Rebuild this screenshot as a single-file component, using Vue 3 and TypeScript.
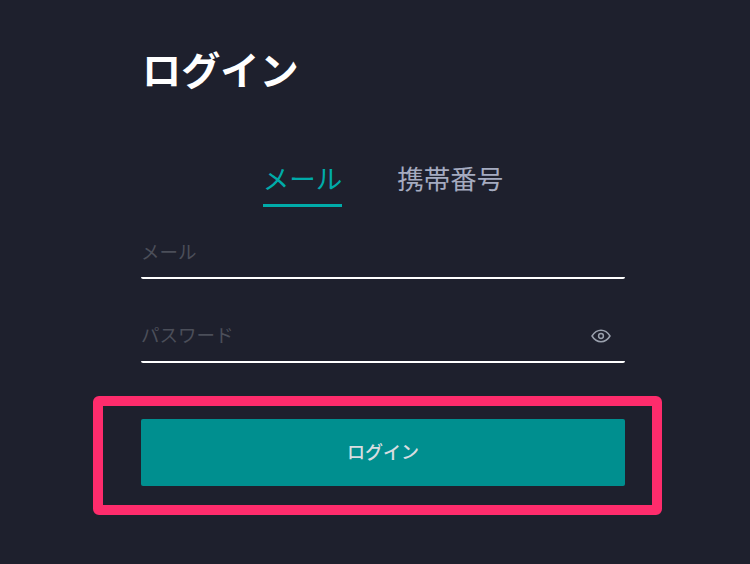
<script setup lang="ts">
import { ref } from 'vue'

const tabs = ref<string[]>(['メール', '携帯番号'])
const active = ref<number>(0)
</script>

<template>
  <main class="page">
    <h1 class="title">ログイン</h1>
    <div class="tabs">
      <button
        v-for="(tab, i) in tabs"
        :key="tab"
        type="button"
        class="tab"
        :class="{ active: i === active }"
        @click="active = i"
      >
        {{ tab }}
      </button>
    </div>
    <form class="form" @submit.prevent>
      <label class="field">
        <input class="input" type="text" placeholder="メール" />
      </label>
      <label class="field">
        <input class="input" type="password" placeholder="パスワード" />
        <svg class="eye" viewBox="0 0 20 20" fill="none" aria-hidden="true">
          <path d="M1 10c2.400-3.900 5.400-5.800 9-5.800s6.600 1.900 9 5.800c-2.400 3.900-5.400 5.800-9 5.800S3.400 13.900 1 10z" stroke="#9aa0ad" stroke-width="1.500" stroke-linejoin="round" />
          <circle cx="10" cy="10" r="2.400" stroke="#9aa0ad" stroke-width="1.500" />
        </svg>
      </label>
      <div class="highlight">
        <button type="submit" class="submit">ログイン</button>
      </div>
    </form>
  </main>
</template>

<style>
html,
body {
  margin: 0;
  background: #1e202d;
}
</style>

<style scoped>
.page {
  box-sizing: border-box;
  width: 750px;
  height: 564px;
  padding: 40px 125px 0 141px;
  background: #1e202d;
  overflow: hidden;
  font-family: "Noto Sans CJK JP", "Liberation Sans", sans-serif;
}

.title {
  margin: 0;
  padding-left: 1px;
  height: 56px;
  line-height: 56px;
  font-size: 39.200px;
  font-weight: 700;
  color: #ffffff;
}

.tabs {
  display: flex;
  justify-content: center;
  gap: 55px;
  margin-top: 62px;
}

.tab {
  height: 49px;
  padding: 0 0 6px;
  border: 0;
  border-bottom: 3px solid transparent;
  background: none;
  font-family: inherit;
  font-size: 26.500px;
  line-height: 40px;
  color: #a5abc0;
  cursor: pointer;
}

.tab.active {
  color: #00aba9;
  border-bottom-color: #00aba9;
}

.form {
  display: flex;
  flex-direction: column;
}

.field {
  display: flex;
  align-items: center;
  box-sizing: border-box;
  height: 72px;
  padding-top: 18px;
  border-bottom: 2px solid #ffffff;
  border-radius: 0 0 2px 2px;
}

.field + .field {
  margin-top: 12px;
  padding-top: 16px;
}

.input {
  flex: 1;
  min-width: 0;
  padding: 0;
  border: 0;
  outline: 0;
  background: none;
  font-family: inherit;
  font-size: 18.500px;
  color: #ffffff;
}

.input::placeholder {
  color: #4b4e59;
  opacity: 1;
}

.eye {
  width: 20px;
  height: 20px;
  margin-top: 3px;
  margin-right: 14px;
}

.highlight {
  box-sizing: border-box;
  width: 569px;
  height: 119px;
  margin: 33px 0 0 -48px;
  padding: 13px 27px 19px 38px;
  border: 10px solid #fe2c6c;
  border-radius: 6px;
}

.submit {
  display: block;
  width: 484px;
  height: 67px;
  padding: 0 0 3px;
  border: 0;
  border-radius: 2px;
  background: #008f8f;
  font-family: inherit;
  font-size: 18px;
  font-weight: 500;
  color: #d8dde0;
  cursor: pointer;
}
</style>
